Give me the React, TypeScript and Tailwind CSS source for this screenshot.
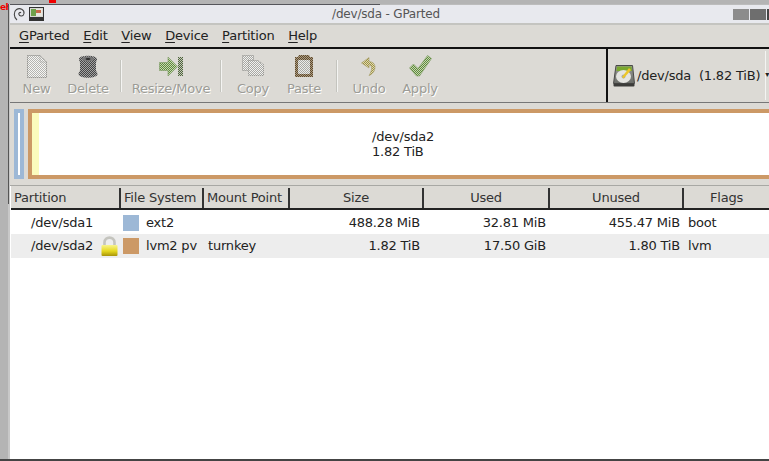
import React from "react";

const font = "[font-family:'DejaVu_Sans',sans-serif] tracking-[-0.2px]";

function Dither({ id, fg, bg }: { id: string; fg: string; bg: string }) {
  return (
    <pattern id={id} width="2" height="2" patternUnits="userSpaceOnUse">
      <rect width="2" height="2" fill={bg} />
      <rect width="1" height="1" fill={fg} />
      <rect x="1" y="1" width="1" height="1" fill={fg} />
    </pattern>
  );
}

const icons: Record<string, React.ReactNode> = {
  New: (
    <svg width="20" height="23" viewBox="0 0 20 23">
      <defs><Dither id="dn" fg="#b4b4b0" bg="#f6f6f4" /></defs>
      <path d="M0.5 0.5H13L19.5 7V22.5H0.5Z" fill="url(#dn)" stroke="#7e7e7a" strokeDasharray="1 1" />
      <path d="M13 0.5V7H19.5" fill="none" stroke="#a8a8a4" strokeDasharray="1 1" />
    </svg>
  ),
  Delete: (
    <svg width="20" height="23" viewBox="0 0 20 23">
      <defs><Dither id="dd" fg="#444444" bg="#a4a4a4" /></defs>
      <path d="M1 4C1 -0.5 19 -0.5 19 4C19 6 18 6 18 8V15C18 17 19.5 17 19.5 19C19.5 24 0.5 24 0.5 19C0.5 17 2 17 2 15V8C2 6 1 6 1 4Z" fill="url(#dd)" />
      <ellipse cx="10" cy="4" rx="6" ry="2.4" fill="#777" />
      <ellipse cx="10" cy="4" rx="2.5" ry="1.1" fill="#2c2c2c" />
    </svg>
  ),
  "Resize/Move": (
    <svg width="24" height="21" viewBox="0 0 24 21">
      <defs>
        <Dither id="dr" fg="#5f8a3c" bg="#c6d6b2" />
        <Dither id="dk" fg="#4f6240" bg="#c4cab6" />
      </defs>
      <path d="M0.5 6.5H9V1L18.5 10.5L9 20V14.5H0.5Z" fill="url(#dr)" stroke="#7c9a63" strokeWidth="0.6" />
      <rect x="19" y="1" width="5" height="19" fill="url(#dk)" />
    </svg>
  ),
  Copy: (
    <svg width="22" height="22" viewBox="0 0 22 22">
      <defs><Dither id="dc" fg="#a8a8a4" bg="#f2f2f0" /></defs>
      <path d="M0.5 0.5H11.5V15.5H0.5Z" fill="url(#dc)" stroke="#8e8e8a" strokeDasharray="1 1" />
      <path d="M6.5 5.5H16L21.5 9.5V20.5H6.5Z" fill="url(#dc)" stroke="#8e8e8a" strokeDasharray="1 1" />
    </svg>
  ),
  Paste: (
    <svg width="18" height="22" viewBox="0 0 18 22">
      <defs>
        <Dither id="dp" fg="#5c4a30" bg="#ae9c80" />
        <Dither id="dq" fg="#a8a8a4" bg="#ecece8" />
      </defs>
      <path d="M4 0H14L15 2H18V22H0V2H3Z" fill="url(#dp)" />
      <rect x="3" y="5" width="12" height="14" rx="1" fill="url(#dq)" />
    </svg>
  ),
  Undo: (
    <svg width="16" height="19" viewBox="0 0 16 19">
      <defs><Dither id="du" fg="#9c9044" bg="#e0dab0" /></defs>
      <path d="M8 0.5L0.5 6L8 11V8C11.5 8 11.5 13 8 18.5C15 16 17 5 8 4.5Z" fill="url(#du)" stroke="#a49c68" strokeWidth="0.6" />
    </svg>
  ),
  Apply: (
    <svg width="23" height="22" viewBox="0 0 23 22">
      <defs><Dither id="da" fg="#5f8a3c" bg="#c6d6b2" /></defs>
      <path d="M0.5 13L4.5 9L9 13.5L18.5 0.5L22.5 3.5L10.5 21H7.5Z" fill="url(#da)" stroke="#7c9a63" strokeWidth="0.6" />
    </svg>
  ),
};

function Tool({ name, w }: { name: string; w: string }) {
  return (
    <div className={`flex flex-col items-center shrink-0 ${w}`}>
      <div className="h-[32px] pt-[2px] flex items-center justify-center">{icons[name]}</div>
      <span className="text-[13px] leading-[16px] text-[#9c9c96] [text-shadow:1px_1px_0_#fff]">{name}</span>
    </div>
  );
}

const Sep = ({ ml }: { ml: string }) => <div className={`w-[2px] h-[32px] mt-[11px] shrink-0 bg-[#f4f4f2] border-l border-[#c4c4be] ${ml}`} />;

function Menu({ u, rest }: { u: string; rest: string }) {
  return (
    <span>
      <span className="underline underline-offset-2 decoration-1">{u}</span>
      {rest}
    </span>
  );
}

function Lock() {
  return (
    <svg width="17" height="20" viewBox="0 0 17 20" className="block">
      <defs>
        <linearGradient id="lk" x1="0" y1="0" x2="0" y2="1">
          <stop offset="0" stopColor="#f8f48c" />
          <stop offset="0.55" stopColor="#e6d820" />
          <stop offset="1" stopColor="#a89408" />
        </linearGradient>
      </defs>
      <path d="M3.5 10V6.5C3.5 0 13.5 0 13.5 6.5V10" fill="none" stroke="#c4c4be" strokeWidth="2.6" />
      <rect x="0.5" y="9" width="16" height="11" rx="1" fill="url(#lk)" />
    </svg>
  );
}

function Disk() {
  return (
    <svg width="22" height="22" viewBox="0 0 22 22" className="block shrink-0">
      <defs>
        <linearGradient id="db" x1="0" y1="0" x2="0" y2="1">
          <stop offset="0" stopColor="#9a9c96" />
          <stop offset="1" stopColor="#6a6c68" />
        </linearGradient>
      </defs>
      <path d="M3 0.5H19.5L21.5 18.5H0.5Z" fill="url(#db)" stroke="#4a4a48" />
      <path d="M4 1.5H18.5L19 6H3.4Z" fill="#7aa82e" />
      <ellipse cx="10.5" cy="11.5" rx="7.5" ry="6.5" fill="#e4e4e0" />
      <circle cx="10.5" cy="11.5" r="2" fill="#aaaaa6" />
      <path d="M9 12L16 3L18 5L10.5 13.5Z" fill="#ecc62a" />
      <rect x="0.5" y="18.5" width="21" height="3" rx="1" fill="#3c3c3a" />
    </svg>
  );
}

const headCell = "h-full flex items-center border-r-2 border-[#333] shrink-0";
const cols = ["w-[110px]", "w-[83px]", "w-[86px]", "w-[134px]", "w-[126px]", "w-[134px]", "flex-1"];

function Row({ alt, first, name, lock, color, fs, mount, size, used, unused, flags }: any) {
  return (
    <div className={`flex h-[24px] items-center text-[13px] text-[#222] ${first ? "pt-px" : ""} ${alt ? "bg-[#ededed]" : "bg-white"}`}>
      <div className={`${cols[0]} pl-[20px] flex items-center justify-between pr-[3px]`}>
        <span>{name}</span>
        {lock && <Lock />}
      </div>
      <div className={`${cols[1]} flex items-center pl-[2px]`}>
        <span className="w-[16px] h-[16px] mr-[7px]" style={{ background: color }} />
        <span>{fs}</span>
      </div>
      <div className={`${cols[2]} pl-[4px]`}>{mount}</div>
      <div className={`${cols[3]} text-right pr-[4px]`}>{size}</div>
      <div className={`${cols[4]} text-right pr-[4px]`}>{used}</div>
      <div className={`${cols[5]} text-right pr-[4px]`}>{unused}</div>
      <div className={`${cols[6]} pl-[4px]`}>{flags}</div>
    </div>
  );
}

export default function App() {
  return (
    <div className={`relative w-[769px] h-[461px] overflow-hidden bg-[#b4b4b4] pt-[4px] pl-[8px] ${font}`}>
      <span className="absolute left-0 top-[3px] text-[9px] leading-[9px] font-bold text-[#f00000] tracking-[-0.5px]">eh</span>
      <span className="absolute left-[49px] top-0 w-[7px] h-[3px] bg-[#f00000]" />
      <div className="relative h-[455px] flex flex-col bg-white border-l-2 border-[#c8c8c8]">
        <span className="absolute left-[-2px] top-0 w-px h-[200px] bg-[#555]" />
        <div className="h-[19px] flex items-center bg-[#e8e9ee] border-t border-[#55555a] relative shrink-0">
          <svg width="12" height="14" viewBox="0 0 12 14" className="ml-[3px] shrink-0">
            <path d="M4 13C0.5 10.5 0.5 4.5 3.5 2.5C7 0.3 11.5 2.5 11 6.5C10.5 9.5 6.5 9.8 5.8 7.2C5.5 6 7 4.8 8 5.8" fill="none" stroke="#444" strokeWidth="1.1" />
          </svg>
          <svg width="15" height="14" viewBox="0 0 15 14" className="ml-[4px] shrink-0">
            <rect x="0.5" y="0.5" width="14" height="13" fill="#d8d8d4" stroke="#333" />
            <rect x="2" y="2" width="11" height="7" fill="#e8e8e0" />
            <rect x="2" y="2" width="5" height="7" fill="#6fa04a" />
            <rect x="7" y="3" width="5" height="3" fill="#c86a4a" />
            <rect x="1" y="10" width="13" height="3" fill="#333" />
          </svg>
          <span className="flex-1 text-center text-[12px] text-[#555] ml-[-5px]">/dev/sda - GParted</span>
          <span className="w-[16px] h-[11px] bg-[#8c8c8c] mr-[1px]" />
          <span className="w-[16px] h-[11px] bg-[#6e6e6e] mr-[1px]" />
          <span className="w-[2px] h-[11px] bg-[#444]" />
          <span className="absolute right-0 top-[-1px] w-[389px] h-px bg-[#bcbcbc]" />
        </div>
        <div className="h-[24px] flex items-center bg-[#dcdad5] border-t-2 border-[#c4c4c0] text-[13px] text-[#222] pl-[9px] gap-[13.7px] shrink-0">
          <Menu u="G" rest="Parted" />
          <Menu u="E" rest="dit" />
          <Menu u="V" rest="iew" />
          <Menu u="D" rest="evice" />
          <Menu u="P" rest="artition" />
          <Menu u="H" rest="elp" />
        </div>
        <div className="h-[56px] flex bg-[#dcdad5] border-t-2 border-[#111] border-b border-b-[#777] shrink-0">
          <div className="flex-1 flex">
            <Tool name="New" w="w-[53px]" />
            <Tool name="Delete" w="w-[50px]" />
            <Sep ml="ml-[7px]" />
            <Tool name="Resize/Move" w="w-[98px]" />
            <Sep ml="ml-0" />
            <Tool name="Copy" w="w-[62px]" />
            <Tool name="Paste" w="w-[40px]" />
            <Sep ml="ml-[12px]" />
            <Tool name="Undo" w="w-[62px]" />
            <Tool name="Apply" w="w-[40px]" />
          </div>
          <div className="w-[163px] shrink-0 border-l-2 border-[#111] flex items-center text-[13px] text-[#222] pl-[5px] relative">
            <Disk />
            <span className="ml-[2px] whitespace-pre">/dev/sda  (1.82 TiB)</span>
            <span className="absolute right-[3px] top-[2px] bottom-[2px] w-px bg-[#f4f4f2]" />
            <span className="absolute right-0 top-[22px] text-[8px] leading-[8px]">▾</span>
          </div>
        </div>
        <div className="h-[83px] flex items-start bg-[#dcdad5] pl-[4px] pt-[6px] shrink-0 border-b border-[#a8a8a4]">
          <div className="w-[10px] h-[70px] border-[4px] border-[#9db8d6] bg-white shrink-0" />
          <div className="ml-[4px] flex-1 h-[70px] border-[4px] border-r-0 border-[#cc9966] bg-white flex">
            <div className="w-[7px] bg-[#fbfbbd]" />
            <div className="flex-1 text-[13px] leading-[15px] text-[#222] pl-[333px] pt-[16px]">
              <div>/dev/sda2</div>
              <div>1.82 TiB</div>
            </div>
          </div>
        </div>
        <div className="h-[24px] flex text-[13px] text-[#333] pt-[2px] border-b-2 border-[#222] ml-px shrink-0 bg-[#dcdad5]">
          <div className={`${headCell} ${cols[0]} pl-[3px]`}>Partition</div>
          <div className={`${headCell} ${cols[1]} pl-[3px]`}>File System</div>
          <div className={`${headCell} ${cols[2]} pl-[3px]`}>Mount Point</div>
          <div className={`${headCell} ${cols[3]} justify-center`}>Size</div>
          <div className={`${headCell} ${cols[4]} justify-center`}>Used</div>
          <div className={`${headCell} ${cols[5]} justify-center`}>Unused</div>
          <div className="h-full flex items-center justify-center flex-1">Flags</div>
        </div>
        <div className="ml-px bg-white flex-1">
          <Row first name="/dev/sda1" color="#9db8d6" fs="ext2" mount="" size="488.28 MiB" used="32.81 MiB" unused="455.47 MiB" flags="boot" />
          <Row alt lock name="/dev/sda2" color="#cc9966" fs="lvm2 pv" mount="turnkey" size="1.82 TiB" used="17.50 GiB" unused="1.80 TiB" flags="lvm" />
        </div>
      </div>
      <div className="h-[2px] ml-[-8px] bg-[#444]" />
    </div>
  );
}
